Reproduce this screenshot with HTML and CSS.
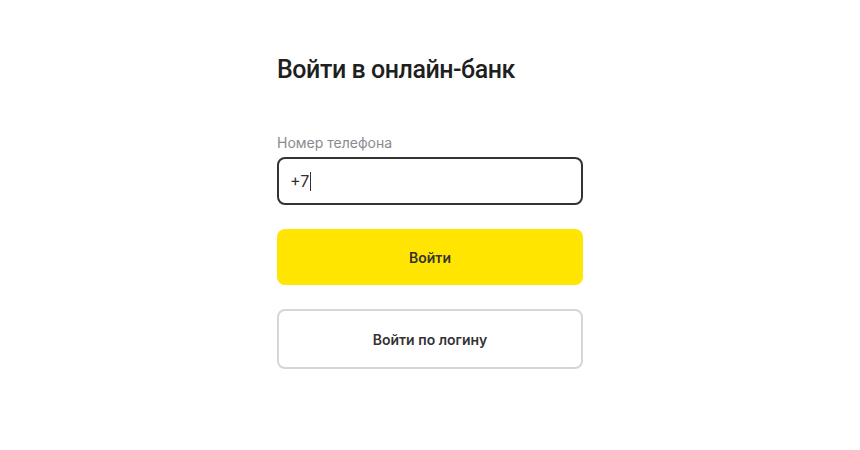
FILE: index.html
```html
<!DOCTYPE html>
<html lang="ru">
<head>
<meta charset="utf-8">
<title>Войти в онлайн-банк</title>
<link rel="stylesheet" href="styles.css">
</head>
<body>
<main class="login">
  <h1 class="login-title">Войти в онлайн-банк</h1>
  <form class="login-form">
    <label class="field-label">Номер телефона</label>
    <div class="field-input"><span class="field-value">+7</span><span class="caret"></span></div>
    <button type="button" class="btn btn-primary">Войти</button>
    <button type="button" class="btn btn-secondary">Войти по логину</button>
  </form>
</main>
</body>
</html>
```

FILE: styles.css
```css
html, body {
  margin: 0;
  padding: 0;
  background: #ffffff;
}
body {
  font-family: "Inter", "Liberation Sans", sans-serif;
  color: #333333;
}
.login {
  width: 306px;
  margin: 0 auto;
  padding-top: 53px;
}
.login-title {
  margin: 0;
  font-family: "Roboto", "Inter", sans-serif;
  font-size: 25px;
  line-height: 34px;
  font-weight: 500;
  color: #1f1f1f;
  letter-spacing: -0.45px;
}
.login-form {
  display: flex;
  flex-direction: column;
  margin-top: 46px;
}
.field-label {
  font-size: 14px;
  line-height: 20px;
  color: #8a8a8f;
  margin-bottom: 4px;
}
.field-input {
  box-sizing: border-box;
  height: 48px;
  border: 2px solid #333333;
  border-radius: 8px;
  display: flex;
  align-items: center;
  padding-left: 11px;
  font-size: 16px;
  color: #333333;
}
.caret {
  display: inline-block;
  width: 1px;
  height: 19px;
  background: #333333;
  margin-left: 1px;
}
.btn {
  box-sizing: border-box;
  width: 100%;
  border-radius: 8px;
  font-family: inherit;
  font-size: 14px;
  font-weight: 600;
  color: #333333;
  cursor: pointer;
  margin-top: 24px;
}
.btn-primary {
  height: 56px;
  background: #ffe500;
  border: none;
}
.btn-secondary {
  height: 60px;
  background: #ffffff;
  border: 2px solid #d6d6d6;
}
```
